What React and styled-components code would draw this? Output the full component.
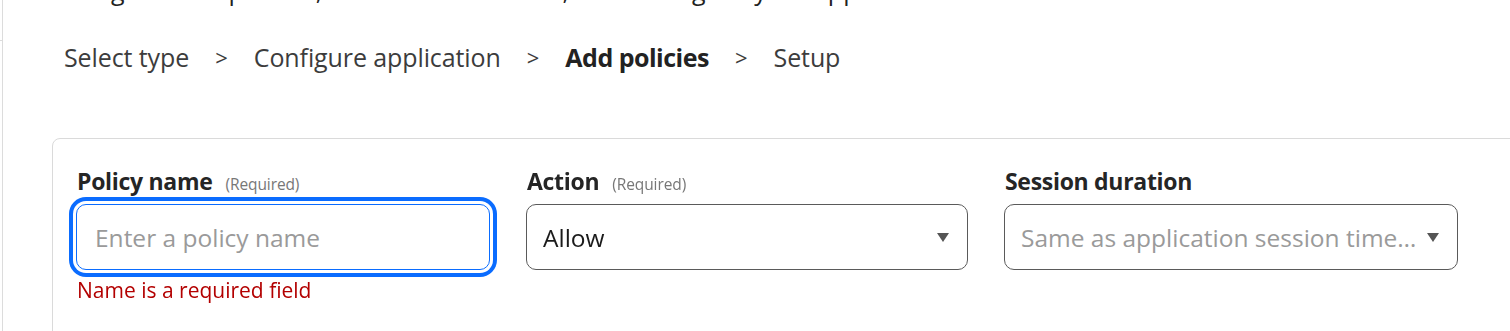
import styled, { createGlobalStyle } from 'styled-components';

const GlobalStyle = createGlobalStyle`
  html, body {
    margin: 0;
    padding: 0;
    background: #fff;
    overflow: hidden;
  }
  body {
    font-family: 'Open Sans', 'Noto Sans', sans-serif;
    color: #313131;
  }
`;

const steps = [
  { label: 'Select type' },
  { label: 'Configure application' },
  { label: 'Add policies', active: true },
  { label: 'Setup' },
];

const Page = styled.div`
  display: flex;
  height: 331px;
`;

const Rail = styled.div`
  width: 2px;
  flex-shrink: 0;
  border-right: 1px solid #dcdcdc;

  .tick {
    height: 40px;
    border-bottom: 1px solid #dcdcdc;
  }
`;

const Main = styled.main`
  flex: 1;
  min-width: 0;
  overflow: hidden;
`;

// description line above the steps, scrolled mostly out of view
const Intro = styled.p`
  margin: -27px 0 0 62px;
  font-size: 25px;
  line-height: 34px;
  height: 34px;
  color: #222;
  white-space: nowrap;
`;

const Crumbs = styled.nav`
  display: flex;
  align-items: center;
  gap: 26px;
  margin: 33px 0 0 61px;
  height: 34px;
`;

const Crumb = styled.span`
  font-size: 25px;
  font-weight: ${({ active }) => (active ? 700 : 400)};
  color: ${({ active }) => (active ? '#222' : '#3c3c3c')};
  letter-spacing: ${({ active }) => (active ? '-0.5px' : '-0.1px')};
`;

const Sep = styled.span`
  font-size: 22px;
  color: #3c3c3c;
`;

const Card = styled.section`
  margin: 64px 0 0 49px;
  width: 1500px;
  border: 1px solid #dadada;
  border-radius: 8px;
  padding: 25px 23px 24px;
  box-sizing: border-box;
  height: 220px;
`;

const Fields = styled.div`
  display: grid;
  grid-template-columns: 414px 442px 454px;
  column-gap: 36px;
  align-items: start;
`;

const Field = styled.div`
  display: flex;
  flex-direction: column;
`;

const Label = styled.label`
  display: flex;
  align-items: baseline;
  gap: 13px;
  margin-left: 1px;
  height: 40px;
  padding-top: 1px;
  box-sizing: border-box;
  font-size: 23px;
  font-weight: 700;
  color: #252525;
  letter-spacing: -0.3px;

  small {
    font-size: 15.5px;
    font-weight: 400;
    color: #777;
    letter-spacing: -0.1px;
  }
`;

const TextInput = styled.input`
  height: 66px;
  box-sizing: border-box;
  padding: 0 18px;
  border: 1px solid #0a6cff;
  border-radius: 10px;
  box-shadow: 0 0 0 3px #fff, 0 0 0 7px #0a6cff;
  outline: none;
  font: inherit;
  font-size: 24.5px;
  color: #222;
  caret-color: #222;

  &::placeholder {
    color: #9a9a9a;
  }
`;

const Select = styled.div`
  height: 66px;
  box-sizing: border-box;
  padding: 0 18px 0 16px;
  border: 1px solid #5a5a5a;
  border-radius: 10px;
  display: flex;
  align-items: center;
  gap: 8px;
  font-size: 24.5px;
  color: ${({ placeholder }) => (placeholder ? '#9a9a9a' : '#1b1b1b')};

  span {
    flex: 1;
    min-width: 0;
    white-space: nowrap;
    overflow: hidden;
    text-overflow: ellipsis;
  }

  svg {
    flex-shrink: 0;
  }
`;

const ErrorText = styled.div`
  margin: 6px 0 0 1px;
  font-size: 21px;
  color: #b30000;
`;

const Caret = () => (
  <svg width="12" height="9" viewBox="0 0 12 9">
    <path d="M0 0h12L6 9z" fill="#555" />
  </svg>
);

const App = () => (
  <>
    <GlobalStyle />
    <Page>
      <Rail>
        <div className="tick" />
      </Rail>
      <Main>
        <Intro>Assign access policies, authentication rules, and settings to your application</Intro>
        <Crumbs>
          {steps.flatMap((step, i) => [
            i > 0 && <Sep key={`s${i}`}>&gt;</Sep>,
            <Crumb key={step.label} active={step.active}>
              {step.label}
            </Crumb>,
          ])}
        </Crumbs>
        <Card>
          <Fields>
            <Field>
              <Label>
                Policy name <small>(Required)</small>
              </Label>
              <TextInput autoFocus placeholder="Enter a policy name" />
              <ErrorText>Name is a required field</ErrorText>
            </Field>
            <Field>
              <Label>
                Action <small>(Required)</small>
              </Label>
              <Select>
                <span>Allow</span>
                <Caret />
              </Select>
            </Field>
            <Field>
              <Label>Session duration</Label>
              <Select placeholder>
                <span>Same as application session timeout</span>
                <Caret />
              </Select>
            </Field>
          </Fields>
        </Card>
      </Main>
    </Page>
  </>
);

export default App;
